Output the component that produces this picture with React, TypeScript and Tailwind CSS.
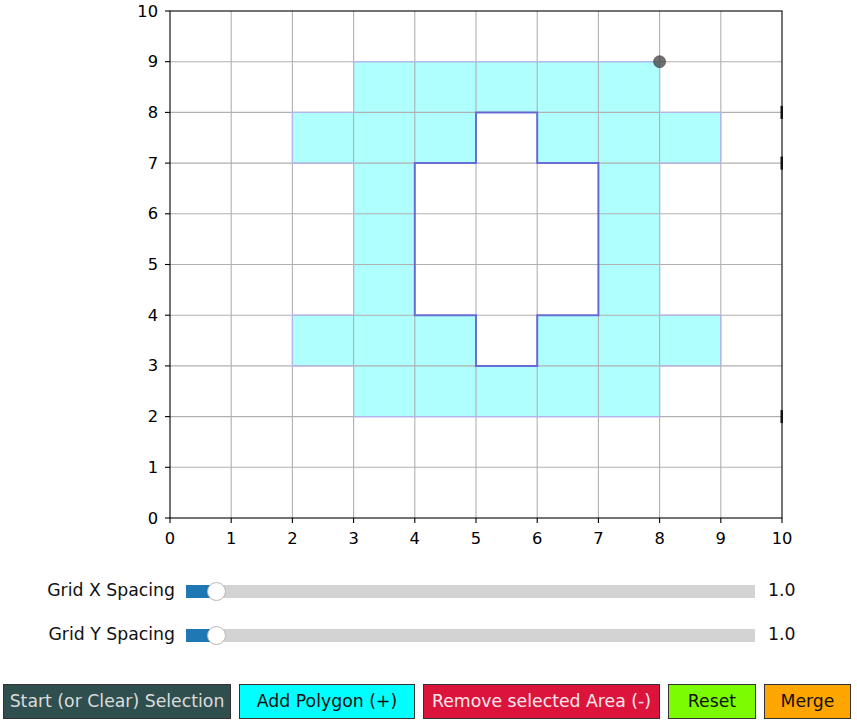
import React from "react";

const X0 = 170;
const Y0 = 518;
const UX = 61.2;
const UY = 50.7;
const px = (v: number) => X0 + v * UX;
const py = (v: number) => Y0 - v * UY;

const outer: [number, number][] = [
  [3, 2], [8, 2], [8, 3], [9, 3], [9, 4], [8, 4], [8, 7], [9, 7], [9, 8], [8, 8],
  [8, 9], [3, 9], [3, 8], [2, 8], [2, 7], [3, 7], [3, 4], [2, 4], [2, 3], [3, 3],
];

const hole: [number, number][] = [
  [4, 4], [5, 4], [5, 3], [6, 3], [6, 4], [7, 4], [7, 7], [6, 7], [6, 8], [5, 8], [5, 7], [4, 7],
];

const toPath = (pts: [number, number][]) =>
  pts.map(([x, y], i) => `${i === 0 ? "M" : "L"}${px(x).toFixed(1)},${py(y).toFixed(1)}`).join(" ") + " Z";

const ticks = [0, 1, 2, 3, 4, 5, 6, 7, 8, 9, 10];

function Chart() {
  return (
    <svg width={857} height={560} className="block" style={{ fontFamily: "'DejaVu Sans', sans-serif" }}>
      <path d={toPath(outer) + " " + toPath(hole)} fill="#b0ffff" fillRule="evenodd" />
      {ticks.slice(1, 10).map((t) => (
        <g key={t}>
          <line x1={px(t)} x2={px(t)} y1={py(0)} y2={py(10)} stroke="#b0b0b0" strokeWidth={1.1} />
          <line x1={px(0)} x2={px(10)} y1={py(t)} y2={py(t)} stroke="#b0b0b0" strokeWidth={1.1} />
        </g>
      ))}
      <path d={toPath(outer)} fill="none" stroke="#b4b4f0" strokeWidth={1.2} />
      <path d={toPath(hole)} fill="none" stroke="#5a5ad8" strokeWidth={2} strokeOpacity={0.85} />
      <rect x={px(0)} y={py(10)} width={px(10) - px(0)} height={py(0) - py(10)} fill="none" stroke="#000" strokeWidth={1.1} />
      {[8, 7, 2].map((t) => (
        <rect key={t} x={780.5} y={py(t) - 6.5} width={2.5} height={13} fill="#111" />
      ))}
      <circle cx={px(8)} cy={py(9)} r={6} fill="#404040" fillOpacity={0.75} stroke="#404040" strokeOpacity={0.6} />
      {ticks.map((t) => (
        <g key={t}>
          <line x1={px(t)} x2={px(t)} y1={Y0} y2={Y0 + 5} stroke="#000" strokeWidth={1.1} />
          <text x={px(t)} y={538} textAnchor="middle" dominantBaseline="central" fontSize={16.3} fill="#000">
            {t}
          </text>
          <line x1={X0 - 5} x2={X0} y1={py(t)} y2={py(t)} stroke="#000" strokeWidth={1.1} />
          <text x={158} y={py(t)} textAnchor="end" dominantBaseline="central" fontSize={16.3} fill="#000">
            {t}
          </text>
        </g>
      ))}
    </svg>
  );
}

function SliderRow({ label, className }: { label: string; className: string }) {
  return (
    <div className={`flex items-center h-[22px] ${className}`}>
      <div className="w-[175px] text-right text-[17.3px] text-[#111] leading-none">{label}</div>
      <div className="relative ml-[11px] w-[569px] h-[13px] bg-[#d3d3d3]">
        <div className="w-[28px] h-full bg-[#1f77b4]" />
        <div className="absolute left-[21px] top-[-3px] w-[19px] h-[19px] rounded-full bg-white border border-[#b8b8b8]" />
      </div>
      <div className="ml-[13px] text-[17.3px] text-[#111] leading-none">1.0</div>
    </div>
  );
}

const buttons = [
  { label: "Start (or Clear) Selection", cls: "w-[228px] bg-[#2f4f4f] text-[#dcdcdc]" },
  { label: "Add Polygon (+)", cls: "w-[176px] bg-[#00ffff] text-[#111]" },
  { label: "Remove selected Area (-)", cls: "w-[237px] bg-[#dc143c] text-[#fbe8ec]" },
  { label: "Reset", cls: "w-[88px] bg-[#7cfc00] text-[#111]" },
  { label: "Merge", cls: "w-[87px] bg-[#ffa500] text-[#111]" },
];

export default function App() {
  return (
    <div className="w-[857px] h-[725px] bg-white flex flex-col overflow-hidden" style={{ fontFamily: "'DejaVu Sans', sans-serif" }}>
      <Chart />
      <SliderRow label="Grid X Spacing" className="mt-[20px]" />
      <SliderRow label="Grid Y Spacing" className="mt-[22px]" />
      <div className="flex gap-2 ml-[3px] mt-[38px]">
        {buttons.map((b) => (
          <div
            key={b.label}
            className={`h-[35px] flex items-center justify-center border border-[#333] text-[17.3px] leading-none ${b.cls}`}
          >
            {b.label}
          </div>
        ))}
      </div>
    </div>
  );
}
